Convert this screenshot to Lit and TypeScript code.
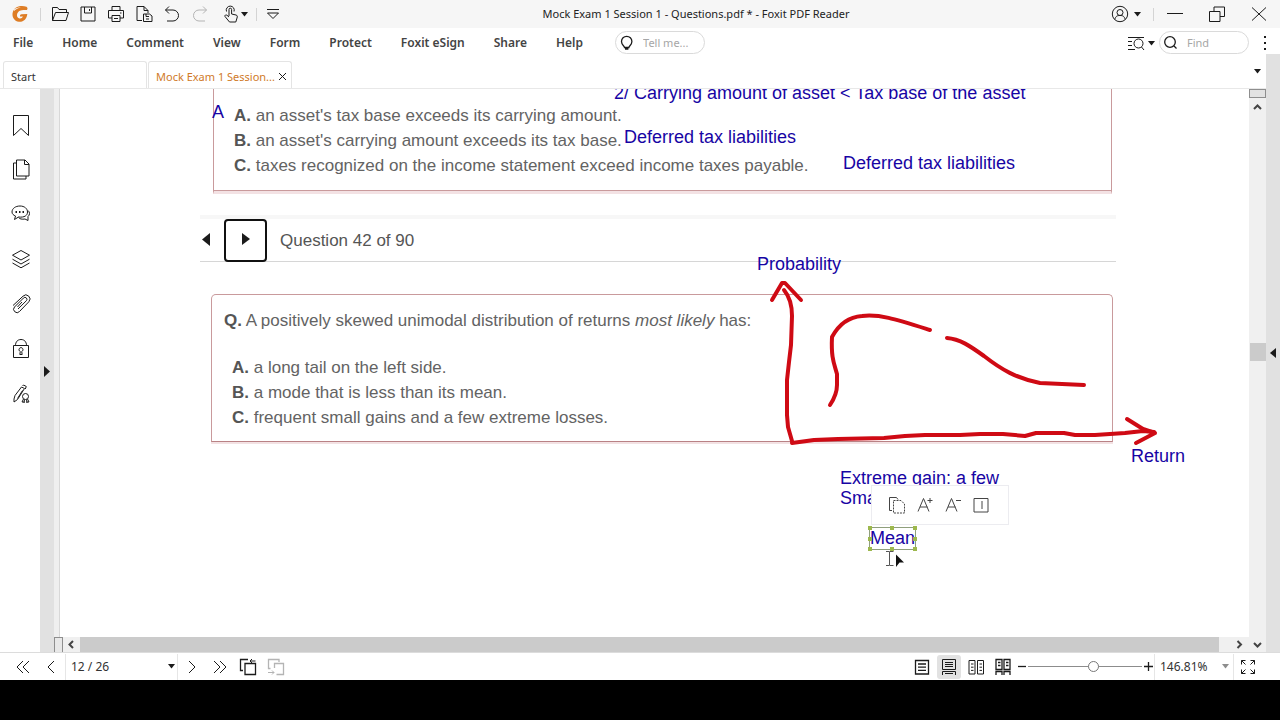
import { LitElement, html, css, svg, TemplateResult } from "lit";
import { customElement, property, state } from "lit/decorators.js";
import { classMap } from "lit/directives/class-map.js";

const icon = (body: TemplateResult, w = 18, h = 18) =>
  html`<svg class="icon" width=${w} height=${h} viewBox="0 0 ${w} ${h}" aria-hidden="true">${body}</svg>`;

const caret = () => icon(svg`<path class="solid" d="M0 0h7L3.500 4.500z"/>`, 7, 5);

const icons = {
  open: svg`<path d="M1.500 15.500V2.500h5l1.500 2h7.500v3M1.500 15.500l3-8h13l-2.500 8z"/>`,
  save: svg`<path d="M2 2h14v14H2zM5.500 2v6h7V2M10.500 4v2"/>`,
  print: svg`<path d="M5 5.500v-4h8v4M5 13H1.500V5.500h15V13H13M5 10.500h8v6H5zM13 8h1.500M7 13.500h4"/>`,
  convert: svg`<path d="M7 15.500H2v-14h7l4 4v2.500M9 1.500v4h4M8.500 9h6l2.500 2v5.500H8.500zM11 9v2.500h3M11 14h3"/>`,
  undo: svg`<path d="M6 1.500L2.500 5 6 8.500M2.500 5H10a5.500 5.500 0 0 1 0 11H4"/>`,
  redo: svg`<path d="M12 1.500L15.500 5 12 8.500M15.500 5H8a5.500 5.500 0 0 0 0 11h6"/>`,
  hand: svg`<path d="M7 11V4.500a1.300 1.300 0 0 1 2.600 0V9l4.400 1c1.500.4 1.500 1.500 1 3l-1.200 4H7.500L3 11.500c-.5-1.500 1-2 2-1.200L7 12M4.500 6.500a4 4 0 1 1 7.500 0"/>`,
  customize: svg`<path d="M3 4.500h12M3.500 8h11L9 13.500z"/>`,
  user: svg`<circle cx="9" cy="9" r="7.700"/><circle cx="9" cy="7.500" r="3"/><path d="M3.800 14.500c1-3.500 2.500-4 5.200-4s4.200.5 5.200 4"/>`,
  minimize: svg`<path d="M1 8.500h16"/>`,
  restore: svg`<path d="M1.500 6.500h10.500v10H1.500zM6 6.500V2h10.500v9.500H12"/>`,
  close: svg`<path d="M2 2.500l14 13M16 2.500l-14 13"/>`,
  bulb: svg`<path class="thick" d="M6.500 13.500c0-1.500-3-2.500-3-6a5.200 5.200 0 0 1 10.400 0c0 3.500-3 4.500-3 6zM7 15h3.400"/>`,
  find: svg`<circle class="thick" cx="8" cy="8" r="5.300"/><path class="thick" d="M12 12l2.500 2.500"/>`,
  advanced: svg`<path d="M1 3.500h16M1 7.500h4M1 11.500h4M1 15.500h7"/><circle cx="11.500" cy="9.500" r="4.500"/><path d="M14.500 13l2.500 3"/>`,
  bookmark: svg`<path d="M3.500 1.500h15v20L11 14.500l-7.500 7z"/>`,
  pages: svg`<path d="M6.500 1h8.500l4 4v12H6.500zM14.500 1v4.500H19M6.500 4h-3v16h12.500v-3"/>`,
  comments: svg`<path d="M5.500 12l-1 3.500 4-2.500c6 .7 9-1.500 9-5 0-3.300-3-6-7.500-6s-8 2.500-8 6c0 2 1.500 3.200 3.500 4zM18 6.500c2 1.500 2 4.500 0 6v4l-3-1.500c-3 .5-5.500 0-6.500-1.500"/><path class="dots" d="M5.500 8h1.500M9 8h1.500M12.500 8h1.500"/>`,
  layers: svg`<path d="M11 1.500l8.500 4.700L11 11 2.500 6.200zM2.500 10.200l8.500 4.800 8.500-4.800M2.500 14l8.500 4.800 8.500-4.800"/>`,
  attach: svg`<path d="M3 11.500L13 2.200a4 4 0 0 1 5.800 5.600L9.500 17.500a3.300 3.300 0 0 1-5-4.500L13.500 4a1.900 1.900 0 0 1 2.900 2.700L8 15M7.500 13l4.500-5"/>`,
  lock: svg`<path d="M3.500 6.500h15v12h-15zM5.500 6.500c0-3.500 2-6 5.500-6s5.500 2.500 5.500 6M10.300 12.500a2 2 0 1 1 1.400 0l.5 3h-2.400z"/>`,
  sign: svg`<path d="M4 15l1-3.500L11.500 3l3 1.500-7 11L4 18zM12.500 2l1-1 2.800 1.500-1 2.500M12.500 6.500l-5 8"/><circle cx="15.500" cy="12.500" r="3"/><path d="M13.500 15l-1.500 3h2.500M17.500 15l1.500 3h-2.500M14.500 15.500l-.5 3.500M16.500 15.500l.5 3.500"/>`,
  first: svg`<path d="M9 3L3 9l6 6M15 3L9 9l6 6"/>`,
  prev: svg`<path d="M12 3L6 9l6 6"/>`,
  next: svg`<path d="M6 3l6 6-6 6"/>`,
  last: svg`<path d="M3 3l6 6-6 6M9 3l6 6-6 6"/>`,
  back: svg`<path class="thick" d="M4 12.500H1.500V1.500H9M6 5.500h10.500v11H6z"/><path d="M16.500 3H11M13 1l-2 2 2 2"/>`,
  forward: svg`<path class="thick" d="M3.500 10.500h-2v-9H12V4M7.500 10V5.500h9v11H9.500"/><path d="M1 14.500h6M5 12.500l2 2-2 2"/>`,
  single: svg`<path class="thick" d="M2.500 2.500h13v13.500h-13zM5 6h8M5 9.200h8M5 12.400h8"/>`,
  scroll: svg`<path d="M2.500 1.500h13v10h-13zM5 4.500h8M5 6.500h8M5 8.500h8M2.500 17v-3.500h13V17M5 15.500h8"/>`,
  facing: svg`<path d="M2 2.500h6v13.500H2zM10.500 2.500h6v13.500h-6zM4 6h2.500M4 9.200h2.500M4 12.400h2.500M12.500 6H15M12.500 9.200H15M12.500 12.400H15"/>`,
  facingScroll: svg`<path class="thick" d="M2 1.500h6v10H2zM10 1.500h6v10h-6zM4 4.500h2.500M4 7.500h2.500M12 4.500h2.500M12 7.500h2.500M2 17v-3.500h6V17M10 17v-3.500h6V17"/>`,
  full: svg`<path d="M2.500 6.500V2.500H6.500M2.500 2.500l4 4M11.500 2.500h4V6.500M15.500 2.500l-4 4M2.500 11.500v4H6.500M2.500 15.500l4-4M11.500 15.500h4V11.500M15.500 15.500l-4-4"/>`,
  copyStyle: svg`<path d="M4 14.500H1.500v-13h7l1.500 2"/><path class="dashed" d="M5.500 4.500h7.500l3.500 3.500v9H5.500z"/>`,
  larger: svg`<path d="M2 15.500L7.500 2.500l5.500 13M4 11h7.500M11.500 4.500h5M14 2v5"/>`,
  smaller: svg`<path d="M2 15.500L7.500 2.500l5.500 13M4 11h7.500M12 4.500h5"/>`,
  panel: svg`<path d="M2 2.500h14v13.500H2zM10 5v8"/>`,
};

const shared = css`
  * { box-sizing: border-box; }
  button {
    display: flex; align-items: center; justify-content: center;
    padding: 0; border: 0; background: none; font: inherit; color: inherit; flex: none;
  }
  .icon { display: block; flex: none; fill: none; stroke: #1b1b1b; stroke-width: 1; overflow: visible; }
  .icon .solid { fill: #1b1b1b; stroke: none; }
  .icon .thick { stroke-width: 1.3; }
  .icon .dots { stroke-width: 2; }
  .icon .dashed { stroke-dasharray: 2 1; }
  .faded .icon { stroke: #b4b4b4; }
`;

@customElement("pdf-title-bar")
class PdfTitleBar extends LitElement {
  @property() heading = "";
  static styles = [shared, css`
    :host { display: flex; align-items: center; height: 28px; background: #f6f6f6; color: #222; }
    .quick { display: flex; align-items: center; width: 284px; height: 28px; flex: none; }
    .logo { width: 18px; height: 18px; margin: 0 11px; display: block; flex: none; }
    .sep { width: 1px; height: 13px; background: #d4d4d4; flex: none; }
    .tool { width: 28px; height: 28px; }
    .tools { display: flex; margin-left: 5px; flex: none; }
    .pick { width: 42px; gap: 1px; }
    .custom { margin-left: 2px; }
    .heading { flex: 1; text-align: center; font-size: 11px; line-height: 28px; font-weight: 400; margin: 0; white-space: nowrap; }
    .account { width: 45px; height: 28px; gap: 5px; justify-content: flex-start; padding-left: 3px; }
    .win { width: 42px; height: 28px; }
  `];
  render() {
    const tools: [string, TemplateResult, boolean][] = [
      ["Open", icons.open, false], ["Save", icons.save, false], ["Print", icons.print, false],
      ["Convert", icons.convert, false], ["Undo", icons.undo, false], ["Redo", icons.redo, true],
    ];
    return html`
      <div class="quick">
        <svg class="logo" viewBox="0 0 18 18" aria-hidden="true">
          <path fill="#de7d25" d="M15.500 1.800C10 0 4 1.500 2 6.500c-1.800 4.800 1 9.800 6 10.300 4.500.4 7.800-2.800 8.300-7.800l-5.800.3c-1.200.2-1.700 1-1.500 2.200h3c-.8 1.500-2 2.300-3.600 1.900-2.200-.5-3-2.700-2.100-4.900C7.500 5.500 10 4.700 16 5c.8-1.200.7-2.500-.5-3.200z"/>
          <path fill="#f6f6f6" d="M3 4.500c2-1.500 4-2 7-2-3 .7-5 1.500-7 3.500z"/>
        </svg>
        <span class="sep"></span>
        <div class="tools">
          ${tools.map(([name, body, off]) => html`
            <button class=${classMap({ tool: true, faded: off })} aria-label=${name}>${icon(body)}</button>`)}
          <button class="tool pick" aria-label="Hand tool">${icon(icons.hand)}${caret()}</button>
        </div>
        <span class="sep"></span>
        <button class="tool custom" aria-label="Customize toolbar">${icon(icons.customize)}</button>
      </div>
      <h1 class="heading">${this.heading}</h1>
      <button class="account" aria-label="Account">${icon(icons.user)}${caret()}</button>
      <span class="sep"></span>
      <button class="win" aria-label="Minimize">${icon(icons.minimize)}</button>
      <button class="win" aria-label="Restore">${icon(icons.restore)}</button>
      <button class="win" aria-label="Close">${icon(icons.close)}</button>`;
  }
}

@customElement("pdf-menu-bar")
class PdfMenuBar extends LitElement {
  static styles = [shared, css`
    :host { display: flex; align-items: flex-start; height: 26px; padding: 3px 0 0 13px; background: #fff; }
    .menus { display: flex; gap: 29px; }
    .menu { font-size: 12px; font-weight: 600; color: #444; line-height: 23px; }
    .field {
      display: flex; align-items: center; height: 23px; width: 90px; flex: none;
      border: 1px solid #dadada; border-radius: 12px; padding-left: 2px;
    }
    .field input {
      border: 0; outline: 0; background: none; padding: 0 0 0 7px; width: 64px; min-width: 0;
      font: inherit; font-size: 11px; color: #333;
    }
    .field input::placeholder { color: #a6a6a6; opacity: 1; }
    .tell { margin-left: 32px; }
    .advanced { margin-left: auto; gap: 3px; height: 24px; margin-right: 4px; }
    .more { width: 31px; height: 24px; }
  `];
  render() {
    const menus = ["File", "Home", "Comment", "View", "Form", "Protect", "Foxit eSign", "Share", "Help"];
    return html`
      <nav class="menus">${menus.map((m) => html`<button class="menu">${m}</button>`)}</nav>
      <label class="field tell">${icon(icons.bulb)}<input aria-label="Tell me" placeholder="Tell me..." /></label>
      <button class="advanced" aria-label="Advanced search">${icon(icons.advanced)}${caret()}</button>
      <label class="field">${icon(icons.find)}<input aria-label="Find" placeholder="Find" /></label>
      <button class="more" aria-label="More">${icon(svg`<path class="dots" d="M2 2v2M2 8v2M2 14v2"/>`, 4, 18)}</button>`;
  }
}

@customElement("pdf-tabs")
class PdfTabs extends LitElement {
  static styles = [shared, css`
    :host {
      display: flex; align-items: flex-end; height: 35px; padding: 0 5px 0 3px; gap: 1px;
      background: #fff; border-bottom: 1px solid #e8e8e8; font-size: 11px;
    }
    .tab {
      display: flex; align-items: center; height: 27px; width: 144px; padding: 2px 4px 0 7px;
      border: 1px solid #e4e4e4; border-bottom: 0; border-radius: 3px 3px 0 0; color: #333; flex: none;
    }
    .tab.active { color: #d07a28; }
    .name { flex: 1; text-align: left; justify-content: flex-start; white-space: nowrap; }
    .x { width: 9px; height: 16px; }
    .list { margin-left: auto; width: 8px; height: 34px; }
  `];
  render() {
    return html`
      <div class="tab"><button class="name">Start</button></div>
      <div class="tab active">
        <button class="name">Mock Exam 1 Session...</button>
        <button class="x" aria-label="Close tab">${icon(svg`<path d="M1 1l7 7M8 1L1 8"/>`, 9, 9)}</button>
      </div>
      <button class="list" aria-label="All tabs">${caret()}</button>`;
  }
}

@customElement("pdf-side-bar")
class PdfSideBar extends LitElement {
  static styles = [shared, css`
    :host { display: flex; flex-direction: column; width: 40px; padding-top: 24px; gap: 21px; background: #fff; }
    .panel { width: 40px; height: 24px; padding-left: 1px; }
  `];
  render() {
    const panels: [string, TemplateResult][] = [
      ["Bookmarks", icons.bookmark], ["Pages", icons.pages], ["Comments", icons.comments], ["Layers", icons.layers],
      ["Attachments", icons.attach], ["Security", icons.lock], ["Signatures", icons.sign],
    ];
    return html`${panels.map(([n, b]) => html`<button class="panel" aria-label=${n}>${icon(b, 22, 22)}</button>`)}`;
  }
}

@customElement("pdf-page")
class PdfPage extends LitElement {
  static styles = [shared, css`
    :host {
      display: block; position: relative; overflow: hidden; background: #fff; color: #636363;
      font-family: "Liberation Sans", Arial, sans-serif; font-size: 17px; line-height: 25px;
    }
    .sheet { padding: 0 133px 0 140px; }
    p, ol, h2 { margin: 0; padding: 0; font-size: inherit; font-weight: 400; }
    ol { list-style: none; }
    b { color: #555; }
    .previous {
      margin: 0 4px 0 13px; padding: 14px 0 12px 20px; height: 105px;
      border: 1px solid #c99a9c; border-top: 0; border-bottom: 3px solid #f3e2e4;
      box-shadow: inset 0 -1px #c99a9c;
    }
    .nav { margin-top: 21px; border-top: 4px solid #f7f7f7; border-bottom: 1px solid #d6d6d6; display: flex; align-items: center; height: 47px; }
    .step { width: 24px; justify-content: flex-start; padding-left: 1px; height: 42px; }
    .step.current { width: 43px; height: 43px; border: 2px solid #111; border-radius: 4px; justify-content: center; padding: 0; }
    .count { margin-left: 13px; color: #555; }
    .question {
      margin: 32px 3px 0 11px; padding: 13px 0 11px 12px;
      border: 1px solid #c99a9c; border-bottom-color: #b98285; border-radius: 5px 5px 0 0; box-shadow: 0 2px #f3e2e4;
    }
    .question ol { margin-top: 22px; padding-left: 8px; }
    .ink { position: absolute; left: 0; top: 0; pointer-events: none; }
    .ink path { fill: none; stroke: #cf0a14; stroke-width: 4; stroke-linecap: round; stroke-linejoin: round; }
    .note { position: absolute; font-size: 18px; line-height: 20px; color: #1704a4; white-space: pre; }
    .n1 { left: 554px; top: -6px; }
    .n2 { left: 564px; top: 38px; }
    .n3 { left: 783px; top: 64px; }
    .n4 { left: 152px; top: 13px; }
    .n5 { left: 697px; top: 165px; }
    .n6 { left: 1071px; top: 357px; }
    .n7 { left: 780px; top: 379px; }
    .n8 { left: 809px; top: 438px; width: 47px; height: 23px; border: 1px solid #8f9f7c; line-height: 21px; }
    .handles { position: absolute; left: -3px; top: -3px; width: 51px; height: 27px; fill: #9db84d; }
    .popup {
      position: absolute; left: 811px; top: 396px; width: 138px; height: 40px; padding: 0 11px;
      display: flex; align-items: center; background: #fff; border: 1px solid #ececf0;
    }
    .popup button { width: 28px; height: 28px; }
    .popup .icon { stroke: #444; }
    .pointer { position: absolute; left: 825px; top: 461px; }
  `];
  render() {
    return html`
      <article class="sheet">
        <ol class="previous">
          <li><b>A.</b> an asset's tax base exceeds its carrying amount.</li>
          <li><b>B.</b> an asset's carrying amount exceeds its tax base.</li>
          <li><b>C.</b> taxes recognized on the income statement exceed income taxes payable.</li>
        </ol>
        <div class="nav">
          <button class="step" aria-label="Previous question">${icon(svg`<path class="solid" d="M9 0v13L1 6.500z"/>`, 9, 14)}</button>
          <button class="step current" aria-label="Next question">${icon(svg`<path class="solid" d="M0 0v12l8-6z"/>`, 8, 14)}</button>
          <h2 class="count">Question 42 of 90</h2>
        </div>
        <section class="question">
          <p><b>Q.</b> A positively skewed unimodal distribution of returns <em>most likely</em> has:</p>
          <ol>
            <li><b>A.</b> a long tail on the left side.</li>
            <li><b>B.</b> a mode that is less than its mean.</li>
            <li><b>C.</b> frequent small gains and a few extreme losses.</li>
          </ol>
        </section>
      </article>
      <svg class="ink" width="1189" height="548" viewBox="60 89 1189 548" aria-hidden="true">
        <path d="M784 290C789 296 792 306 792 316L791 345L789 362L787 380V415L788 427L792 441"/>
        <path d="M772 300L782 283H785L801 300"/>
        <path d="M792 443L814 440L838 439L884 438L905 436L925 435H960L980 434H1003L1025 436L1036 433H1064L1075 435H1095L1125 433L1143 431L1154 432"/>
        <path d="M1127 419L1143 429L1155 433L1136 443"/>
        <path d="M830 405C834 399 837 393 837 385V374C834 363 831 358 832 337C838 326 847 317 862 316C880 314 895 319 930 330"/>
        <path d="M947 338C960 339 970 346 984 356C1002 370 1016 378 1040 383L1084 385"/>
      </svg>
      <div class="note n1">2/ Carrying amount of asset &lt; Tax base of the asset</div>
      <div class="note n2">Deferred tax liabilities</div>
      <div class="note n3">Deferred tax liabilities</div>
      <div class="note n4">A</div>
      <div class="note n5">Probability</div>
      <div class="note n6">Return</div>
      <div class="note n7">Extreme gain: a few
Small</div>
      <div class="note n8">Mean<svg class="handles" viewBox="0 0 51 27" aria-hidden="true">
        <path d="M1 1h4v4H1zM23 1h4v4h-4zM46 1h4v4h-4zM1 12h4v4H1zM46 12h4v4h-4zM1 22h4v4H1zM23 22h4v4h-4zM46 22h4v4h-4z"/></svg>
      </div>
      <div class="popup">
        <button aria-label="Copy format">${icon(icons.copyStyle)}</button>
        <button aria-label="Increase font size">${icon(icons.larger)}</button>
        <button aria-label="Decrease font size">${icon(icons.smaller)}</button>
        <button aria-label="Format panel">${icon(icons.panel)}</button>
      </div>
      <svg class="pointer" width="20" height="20" viewBox="0 0 20 20" aria-hidden="true">
        <path fill="none" stroke="#555" d="M1 1.500h3.500M5 1.500h3.500M4.500 1.500v14M1 15.500h3.500M5 15.500h3.500"/>
        <path fill="#111" d="M11 4.500l8 8h-4.500L11 17z"/>
      </svg>`;
  }
}

@customElement("pdf-status-bar")
class PdfStatusBar extends LitElement {
  @state() private zoom = 58;
  static styles = [shared, css`
    :host { display: flex; align-items: center; height: 28px; background: #fff; border-top: 1px solid #dcdcdc; padding: 0 18px 0 9px; }
    .btn { width: 28px; height: 24px; }
    .view { width: 27px; height: 24px; }
    .on { width: 24px; margin: 0 1px 0 2px; border-radius: 3px; background: #e2e2e2; }
    .pick { position: relative; display: flex; align-items: center; height: 26px; border: solid #e6e6e6; border-width: 0 1px; }
    .pick select {
      appearance: none; border: 0; outline: 0; background: none; width: 100%; height: 26px;
      padding: 0 0 0 5px; font: inherit; font-size: 12px; color: #333;
    }
    .pick .icon { position: absolute; right: 2px; pointer-events: none; }
    .page { width: 113px; }
    .scale { width: 80px; }
    .scale .icon { right: 4px; opacity: .5; }
    .group { margin-left: auto; display: flex; align-items: center; }
    .small { width: 12px; height: 24px; }
    .slider { appearance: none; width: 114px; height: 16px; margin: 0; background: none; }
    .slider::-webkit-slider-runnable-track { height: 1px; background: #8c8c8c; }
    .slider::-webkit-slider-thumb {
      appearance: none; width: 11px; height: 11px; margin-top: -5px;
      border: 1px solid #777; border-radius: 50%; background: #fff;
    }
    .full { width: 28px; height: 24px; }
  `];
  render() {
    return html`
      <button class="btn" aria-label="First page">${icon(icons.first)}</button>
      <button class="btn" aria-label="Previous page">${icon(icons.prev)}</button>
      <label class="pick page"><select aria-label="Page"><option>12 / 26</option></select>${caret()}</label>
      <button class="btn" aria-label="Next page">${icon(icons.next)}</button>
      <button class="btn" aria-label="Last page">${icon(icons.last)}</button>
      <button class="btn" aria-label="Previous view">${icon(icons.back)}</button>
      <button class="btn faded" aria-label="Next view">${icon(icons.forward)}</button>
      <div class="group">
        <button class="view" aria-label="Single page">${icon(icons.single)}</button>
        <button class="view on" aria-label="Continuous">${icon(icons.scroll)}</button>
        <button class="view" aria-label="Facing">${icon(icons.facing)}</button>
        <button class="view" aria-label="Continuous facing">${icon(icons.facingScroll)}</button>
        <button class="small" aria-label="Zoom out">${icon(svg`<path class="thick" d="M0 4.500h8"/>`, 9, 9)}</button>
        <input class="slider" type="range" aria-label="Zoom" .value=${String(this.zoom)}
          @input=${(e: Event) => { this.zoom = Number((e.target as HTMLInputElement).value); }} />
        <button class="small" aria-label="Zoom in">${icon(svg`<path class="thick" d="M0 4.500h9M4.500 0v9"/>`, 9, 9)}</button>
        <label class="pick scale"><select aria-label="Zoom level"><option>146.81%</option></select>${caret()}</label>
        <button class="full" aria-label="Full screen">${icon(icons.full)}</button>
      </div>`;
  }
}

@customElement("app-root")
class AppRoot extends LitElement {
  static styles = [shared, css`
    :host {
      display: flex; flex-direction: column; height: 100vh; padding-bottom: 40px; background: #000;
      box-sizing: border-box; overflow: hidden; font-family: "Noto Sans", "Open Sans", sans-serif;
    }
    .body { flex: 1; min-height: 0; display: flex; background: #fff; }
    .left { flex: 1; min-width: 0; display: flex; flex-direction: column; }
    .rail { width: 14px; background: #e1e1e1; display: flex; align-items: center; justify-content: center; }
    .work { flex: 1; min-height: 0; display: grid; grid-template-columns: 40px 14px 6px 1fr 17px; grid-template-rows: 1fr 15px; }
    .side { grid-row: 1 / 3; }
    .fold { grid-row: 1 / 3; background: #e1e1e1; width: 14px; height: auto; }
    .edge { background: #efefef; border-right: 1px solid #d8d8d8; }
    .vbar { background: #f0f0f0; display: flex; flex-direction: column; align-items: center; }
    .split { width: 17px; height: 9px; border: 1px solid #8e8e8e; background: #e2e2e2; }
    .arrow { width: 17px; height: 17px; }
    .arrow .icon { stroke-width: 2; stroke: #444; }
    .vthumb { width: 16px; height: 18px; background: #cbcbcb; margin-top: 228px; }
    .hbar { grid-column: 3 / 5; display: flex; background: #f0f0f0; }
    .hsplit { width: 9px; border: 1px solid #8e8e8e; border-bottom: 0; background: #e8e8e8; }
    .hthumb { flex: 1; background: #cbcbcb; }
    .hbar .arrow { height: 15px; }
    .end { width: 30px; justify-content: flex-end; padding-right: 7px; }
    .corner { height: 15px; background: #f0f0f0; }
  `];
  render() {
    return html`
      <pdf-title-bar heading="Mock Exam 1 Session 1 - Questions.pdf * - Foxit PDF Reader"></pdf-title-bar>
      <pdf-menu-bar></pdf-menu-bar>
      <div class="body">
        <div class="left">
          <pdf-tabs></pdf-tabs>
          <div class="work">
            <pdf-side-bar class="side"></pdf-side-bar>
            <button class="fold" aria-label="Expand panel">${icon(svg`<path class="solid" d="M0 1v11l6-5.500z"/>`, 6, 11)}</button>
            <div class="edge"></div>
            <pdf-page></pdf-page>
            <div class="vbar">
              <div class="split"></div>
              <button class="arrow" aria-label="Scroll up">${icon(svg`<path d="M1 5l3.500-3.500L8 5"/>`, 9, 6)}</button>
              <div class="vthumb"></div>
            </div>
            <div class="hbar">
              <div class="hsplit"></div>
              <button class="arrow" aria-label="Scroll left">${icon(svg`<path d="M4 1L.5 4.500 4 8"/>`, 6, 9)}</button>
              <div class="hthumb"></div>
              <button class="arrow end" aria-label="Scroll right">${icon(svg`<path d="M1.500 1L5 4.500 1.500 8"/>`, 6, 9)}</button>
            </div>
            <button class="arrow corner" aria-label="Scroll down">${icon(svg`<path d="M1 1l3.500 3.500L8 1"/>`, 9, 6)}</button>
          </div>
        </div>
        <button class="rail" aria-label="Expand right panel">${icon(svg`<path class="solid" d="M6 0v10L0 5z"/>`, 6, 10)}</button>
      </div>
      <pdf-status-bar></pdf-status-bar>`;
  }
}
